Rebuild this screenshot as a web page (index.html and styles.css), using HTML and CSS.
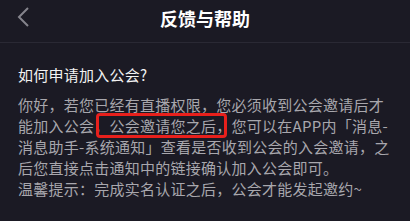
FILE: index.html
```html
<!DOCTYPE html>
<html lang="zh-CN">
<head>
    <meta charset="UTF-8">
    <meta name="viewport" content="width=device-width, initial-scale=1.0">
    <title>反馈与帮助</title>
    <link rel="stylesheet" href="styles.css">
</head>
<body>

    <!-- Top bar -->
    <header class="topbar">
        <a href="#" class="back">
            <svg width="14" height="22" viewBox="0 0 14 22">
                <path d="M12 2 L3 11 L12 20" fill="none" stroke="#85848c" stroke-width="2"/>
            </svg>
        </a>
        <h1>反馈与帮助</h1>
    </header>

    <div class="content">
        <h2 class="question">如何申请加入公会?</h2>
        <p class="answer">
            你好，若您已经有直播权限，您必须收到公会邀请后才<br>
            能加入公会<span class="mark">，公会邀请您之后，</span>您可以在APP内「消息-<br>
            消息助手-系统通知」查看是否收到公会的入会邀请，之<br>
            后您直接点击通知中的链接确认加入公会即可。
        </p>
        <p class="answer">温馨提示：完成实名认证之后，公会才能发起邀约~</p>
    </div>

</body>
</html>
```

FILE: styles.css
```css
body, html {
    margin: 0;
    padding: 0;
    background-color: #1b1a24;
    font-family: "Noto Sans CJK SC", "Noto Sans", sans-serif;
}
.topbar {
    position: relative;
    height: 42px;
    display: flex;
    align-items: center;
    justify-content: center;
    border-bottom: 1px solid #2a2934;
}
.topbar h1 {
    margin: 0;
    font-size: 18px;
    font-weight: bold;
    color: #ffffff;
    line-height: 1;
    margin-top: -6px;
}
.back {
    position: absolute;
    left: 16px;
    top: 6px;
    display: block;
}
.back svg {
    display: block;
}
.content {
    padding: 21px 18px 0 18px;
}
.question {
    margin: 0 0 9px 0;
    font-size: 15px;
    letter-spacing: 0.25px;
    font-weight: normal;
    line-height: 21px;
    color: #f2f2f2;
}
.answer {
    margin: 0;
    font-size: 15px;
    letter-spacing: 0.25px;
    line-height: 21px;
    color: #a8a7ad;
    white-space: nowrap;
}
.mark {
    position: relative;
    display: inline-block;
}
.mark::after {
    content: "";
    position: absolute;
    top: -2px;
    bottom: -2px;
    left: 2px;
    right: 5px;
    border: 3px solid #e8201c;
    border-radius: 4px;
}
```
